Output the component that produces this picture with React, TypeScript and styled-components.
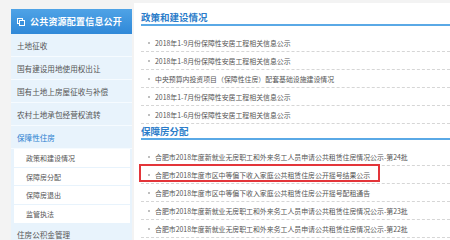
import React from 'react';
import styled, { createGlobalStyle } from 'styled-components';

const GlobalStyle = createGlobalStyle`
  html, body {
    margin: 0;
    padding: 0;
    background: #f3f3f3;
    font-family: "Noto Sans CJK SC", "Noto Sans", sans-serif;
  }
`;

const Page = styled.div`
  display: flex;
  width: 450px;
  height: 240px;
  overflow: hidden;
  padding-left: 11px;
  box-sizing: border-box;
`;

const Sidebar = styled.div`
  width: 121px;
  flex: none;
  margin-top: 9px;
  background: #e8f3fc;
`;

const SideHeader = styled.div`
  height: 25px;
  display: flex;
  align-items: center;
  gap: 5px;
  padding-left: 6px;
  background: linear-gradient(#4fa3e6, #2f88d8);
  color: #fff;
  font-size: 9px;
  font-weight: bold;
  letter-spacing: 0.2px;
`;

const SideItem = styled.div<{ $active?: boolean }>`
  height: 23px;
  display: flex;
  align-items: center;
  padding-left: 6px;
  font-size: 7.6px;
  color: ${(p) => (p.$active ? '#2b7fd0' : '#555')};
  border-bottom: 1px solid #f6fbff;
  box-sizing: border-box;
`;

const SubList = styled.div`
  padding: 0 2px 0 3px;
`;

const SubItem = styled.div`
  height: 18.7px;
  display: flex;
  align-items: center;
  padding-left: 12px;
  font-size: 7px;
  color: #555;
  background: #fff;
  border-bottom: 1px solid #e8f3fc;
  box-sizing: border-box;
`;

const Content = styled.div`
  flex: 1;
  margin-top: 3px;
  margin-left: 2px;
  background: #fff;
  padding: 7px 0 0 7px;
`;

const SectionTitle = styled.div`
  height: 16px;
  display: flex;
  align-items: center;
  padding-bottom: 1px;
  font-size: 9.5px;
  font-weight: bold;
  color: #2b7cc9;
  border-bottom: 2px solid #5aa9e6;
  box-sizing: border-box;
  margin-bottom: 8px;
`;

const Row = styled.div`
  height: 18px;
  display: flex;
  align-items: center;
  gap: 5px;
  padding-left: 7px;
  font-size: 6.9px;
  color: #555;
  white-space: nowrap;
  border-bottom: 1px dashed #d6d6d6;
  box-sizing: border-box;
  position: relative;
`;

const Mark = styled.div`
  position: absolute;
  left: -2px;
  top: -2px;
  width: 241px;
  height: 18px;
  border: 2px solid #e3353a;
  box-sizing: border-box;
  pointer-events: none;
`;

const Dot = styled.span`
  width: 2px;
  height: 2px;
  border-radius: 1px;
  background: #aaa;
  flex: none;
`;

const HeaderIcon = () => (
  <svg width="8" height="8" viewBox="0 0 8 8">
    <rect x="0.5" y="0.5" width="5" height="5" fill="none" stroke="#fff" strokeWidth="1" />
    <rect x="2.5" y="2.5" width="5" height="5" fill="#3a90dc" stroke="#fff" strokeWidth="1" />
  </svg>
);

const policyItems = [
  '2018年1-9月份保障性安居工程相关信息公示',
  '2018年1-8月份保障性安居工程相关信息公示',
  '中央预算内投资项目（保障性住房）配套基础设施建设情况',
  '2018年1-7月份保障性安居工程相关信息公示',
  '2018年1-6月份保障性安居工程相关信息公示',
];

const allocItems = [
  '合肥市2018年度新就业无房职工和外来务工人员申请公共租赁住房情况公示-第24批',
  '合肥市2018年度市区中等偏下收入家庭公共租赁住房公开摇号结果公示',
  '合肥市2018年度市区中等偏下收入家庭公共租赁住房公开摇号配租通告',
  '合肥市2018年度新就业无房职工和外来务工人员申请公共租赁住房情况公示-第23批',
  '合肥市2018年度新就业无房职工和外来务工人员申请公共租赁住房情况公示-第22批',
];

export default function App() {
  return (
    <>
      <GlobalStyle />
      <Page>
        <Sidebar>
          <SideHeader>
            <HeaderIcon />
            公共资源配置信息公开
          </SideHeader>
          <SideItem>土地征收</SideItem>
          <SideItem>国有建设用地使用权出让</SideItem>
          <SideItem>国有土地上房屋征收与补偿</SideItem>
          <SideItem>农村土地承包经营权流转</SideItem>
          <SideItem $active>保障性住房</SideItem>
          <SubList>
            <SubItem>政策和建设情况</SubItem>
            <SubItem>保障房分配</SubItem>
            <SubItem>保障房退出</SubItem>
            <SubItem>监管执法</SubItem>
          </SubList>
          <SideItem>住房公积金管理</SideItem>
        </Sidebar>
        <Content>
          <SectionTitle>政策和建设情况</SectionTitle>
          {policyItems.map((t, i) => (
            <Row key={i}>
              <Dot />
              {t}
            </Row>
          ))}
          <SectionTitle>保障房分配</SectionTitle>
          {allocItems.map((t, i) => (
            <Row key={i}>
              {i === 1 && <Mark />}
              <Dot />
              {t}
            </Row>
          ))}
          <SectionTitle>保障房退出</SectionTitle>
        </Content>
      </Page>
    </>
  );
}
